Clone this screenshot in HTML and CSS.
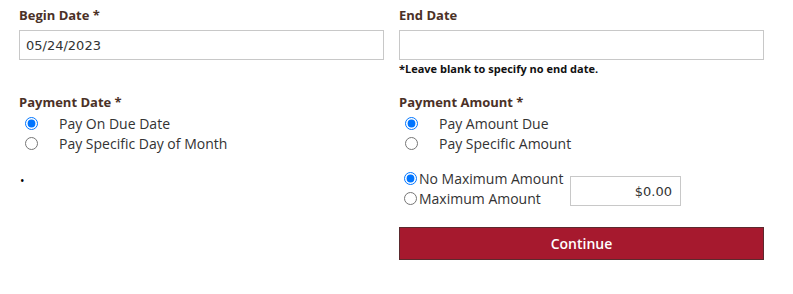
FILE: index.html
```html
<!DOCTYPE html>
<html>
<head>
<meta charset="utf-8">
<link rel="stylesheet" href="styles.css">
</head>
<body>
<form class="form">
  <div class="grid">
    <div class="field">
      <label class="label">Begin Date *</label>
      <input class="text-input" type="text" value="05/24/2023">
    </div>
    <div class="field">
      <label class="label">End Date</label>
      <input class="text-input" type="text" value="">
      <div class="hint">*Leave blank to specify no end date.</div>
    </div>

    <div class="group">
      <div class="label">Payment Date *</div>
      <label class="option"><input type="radio" name="pd" checked><span>Pay On Due Date</span></label>
      <label class="option"><input type="radio" name="pd"><span>Pay Specific Day of Month</span></label>
    </div>
    <div class="group">
      <div class="label">Payment Amount *</div>
      <label class="option"><input type="radio" name="pa" checked><span>Pay Amount Due</span></label>
      <label class="option"><input type="radio" name="pa"><span>Pay Specific Amount</span></label>
    </div>

    <div class="bullet">•</div>
    <div class="max-block">
      <div class="max-options">
        <label class="tight-option"><input type="radio" name="mx" checked><span>No Maximum Amount</span></label>
        <label class="tight-option"><input type="radio" name="mx"><span>Maximum Amount</span></label>
      </div>
      <input class="amount-input" type="text" value="$0.00">
    </div>

    <div></div>
    <button class="continue" type="button">Continue</button>
  </div>
</form>
</body>
</html>
```
FILE: styles.css
```css
html, body {
  margin: 0;
  padding: 0;
  background: #fff;
}
body {
  font-family: "Open Sans", "Noto Sans", sans-serif;
  font-size: 14px;
  color: #3a3a3a;
}
.form {
  padding: 6px 0 0 19px;
}
.grid {
  display: grid;
  grid-template-columns: 365px 365px;
  column-gap: 15px;
}
.label {
  display: block;
  font-weight: 700;
  color: #4b3127;
  font-size: 13px;
  line-height: 18px;
}
.field {
  display: flex;
  flex-direction: column;
}
.text-input {
  box-sizing: border-box;
  width: 365px;
  height: 30px;
  margin-top: 6px;
  border: 1px solid #c8c8c8;
  padding: 0 6px;
  font-family: "DejaVu Sans", Verdana, sans-serif;
  font-size: 13px;
  color: #333;
  outline: none;
}
.hint {
  margin-top: 2px;
  font-size: 11px;
  font-weight: 700;
  color: #111;
  line-height: 14px;
}
.group {
  margin-top: 17px;
  display: flex;
  flex-direction: column;
}
.group .label {
  margin-bottom: 2px;
}
.option {
  display: flex;
  align-items: center;
  height: 20px;
  color: #333;
}
.option input {
  margin: 0 21px 0 6px;
  width: 13px;
  height: 13px;
}
.bullet {
  margin-top: 22px;
  margin-left: 1px;
  font-size: 12px;
  line-height: 12px;
  color: #000;
}
.max-block {
  margin-top: 15px;
  display: flex;
  align-items: flex-start;
}
.max-options {
  display: flex;
  flex-direction: column;
  width: 171px;
}
.tight-option {
  display: flex;
  align-items: center;
  height: 20px;
  color: #333;
}
.tight-option input {
  margin: 0 2px 0 5px;
  width: 13px;
  height: 13px;
}
.amount-input {
  box-sizing: border-box;
  width: 111px;
  height: 30px;
  margin-top: 8px;
  border: 1px solid #c8c8c8;
  padding: 0 8px;
  text-align: right;
  font-family: "DejaVu Sans", Verdana, sans-serif;
  font-size: 13px;
  color: #333;
  outline: none;
}
.continue {
  margin-top: 19px;
  box-sizing: border-box;
  width: 365px;
  height: 33px;
  background: #a6192e;
  border: 1px solid #5b2a2e;
  color: #fff;
  font-family: "Open Sans", "Noto Sans", sans-serif;
  font-size: 14px;
  font-weight: 600;
}
```
